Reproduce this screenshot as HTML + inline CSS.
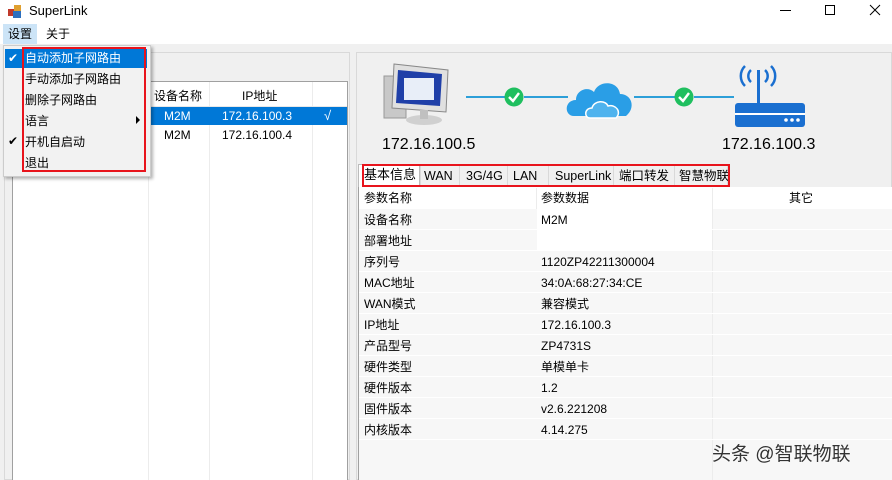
<!DOCTYPE html>
<html><head><meta charset="utf-8"><style>
*{margin:0;padding:0;box-sizing:border-box}
body{width:892px;height:480px;overflow:hidden;background:#f0f0f0;font-family:"Liberation Sans","Noto Sans CJK SC",sans-serif;font-size:12px;color:#000;position:relative}
.a{position:absolute}
.t{white-space:nowrap;line-height:16px;height:16px}
</style></head><body>
<div class="a" style="left:0;top:0;width:892px;height:22px;background:#fff"></div>
<svg class="a" style="left:7px;top:3px" width="16" height="16"><rect x="1" y="6" width="7" height="7" fill="#c0392b"/><rect x="7" y="2" width="7" height="7" fill="#e0a030"/><rect x="6" y="8" width="8" height="7" fill="#2c6fbf"/></svg>
<div class="a t" style="left:29px;top:3px;font-size:13px">SuperLink</div>
<div class="a" style="left:780px;top:10px;width:11px;height:1px;background:#000"></div>
<div class="a" style="left:825px;top:5px;width:10px;height:10px;border:1px solid #000"></div>
<svg class="a" style="left:869px;top:4px" width="12" height="12"><path d="M1 1L11 11M11 1L1 11" stroke="#000" stroke-width="1"/></svg>
<div class="a" style="left:0;top:22px;width:892px;height:22px;background:#fff"></div>
<div class="a" style="left:3px;top:24px;width:34px;height:20px;background:#cce4f7"></div>
<div class="a t" style="left:8px;top:26px">设置</div>
<div class="a t" style="left:46px;top:26px">关于</div>
<div class="a" style="left:4px;top:52px;width:346px;height:428px;border:1px solid #d9d9d9;background:#f0f0f0"></div>
<div class="a" style="left:12px;top:81px;width:336px;height:399px;background:#fff;border:1px solid #a0a0a0;border-bottom:none"></div>
<div class="a" style="left:148px;top:82px;width:1px;height:398px;background:#ececec"></div>
<div class="a" style="left:209px;top:82px;width:1px;height:398px;background:#ececec"></div>
<div class="a" style="left:312px;top:82px;width:1px;height:398px;background:#ececec"></div>
<div class="a" style="left:13px;top:106px;width:334px;height:1px;background:#e8e8e8"></div>
<div class="a t" style="left:154px;top:88px">设备名称</div>
<div class="a t" style="left:242px;top:88px">IP地址</div>
<div class="a" style="left:148px;top:107px;width:199px;height:18px;background:#0078d7"></div>
<div class="a t" style="left:164px;top:108px;color:#fff">M2M</div>
<div class="a t" style="left:222px;top:108px;color:#fff">172.16.100.3</div>
<div class="a t" style="left:324px;top:108px;color:#fff;font-size:13px">√</div>
<div class="a t" style="left:164px;top:127px">M2M</div>
<div class="a t" style="left:222px;top:127px">172.16.100.4</div>
<div class="a" style="left:3px;top:45px;width:148px;height:132px;background:#f2f2f2;border:1px solid #ccc;box-shadow:2px 2px 3px rgba(0,0,0,.3)"></div>
<div class="a" style="left:5px;top:49px;width:142px;height:19px;background:#0078d7"></div>
<div class="a t" style="left:8px;top:50px;color:#fff">✔</div>
<div class="a t" style="left:8px;top:133px">✔</div>
<div class="a t" style="left:25px;top:50px;color:#fff">自动添加子网路由</div>
<div class="a t" style="left:25px;top:71px">手动添加子网路由</div>
<div class="a t" style="left:25px;top:92px">删除子网路由</div>
<div class="a t" style="left:25px;top:113px">语言</div>
<div class="a" style="left:136px;top:116px;width:0;height:0;border-left:4px solid #000;border-top:4px solid transparent;border-bottom:4px solid transparent"></div>
<div class="a t" style="left:25px;top:134px">开机自启动</div>
<div class="a t" style="left:25px;top:155px">退出</div>
<div class="a" style="left:22px;top:47px;width:124px;height:125px;border:2px solid #e8141c"></div>
<div class="a" style="left:356px;top:52px;width:536px;height:428px;border:1px solid #d9d9d9;background:#f0f0f0"></div>
<svg class="a" style="left:382px;top:62px" width="82" height="70">
<rect x="2" y="14" width="22" height="42" fill="#c8c8c8" stroke="#999"/>
<path d="M12 2L66 8L64 50L10 46Z" fill="#e0e0e0" stroke="#888"/>
<path d="M16 8L60 12L58 44L14 41Z" fill="#1f3fa8"/>
<rect x="22" y="16" width="30" height="22" fill="#e8eef8"/>
<ellipse cx="42" cy="58" rx="18" ry="5" fill="#d0d0d0"/>
<rect x="38" y="48" width="8" height="9" fill="#c0c0c0"/>
</svg>
<div class="a" style="left:466px;top:96px;width:48px;height:2px;background:#2d9fd8"></div>
<div class="a" style="left:524px;top:96px;width:44px;height:2px;background:#2d9fd8"></div>
<div class="a" style="left:634px;top:96px;width:42px;height:2px;background:#2d9fd8"></div>
<div class="a" style="left:694px;top:96px;width:40px;height:2px;background:#2d9fd8"></div>
<svg class="a" style="left:504px;top:87px" width="20" height="20"><circle cx="10" cy="10" r="9.5" fill="#1fbf5f"/><path d="M5 10L9 14L15 6" stroke="#fff" stroke-width="2.4" fill="none"/></svg>
<svg class="a" style="left:674px;top:87px" width="20" height="20"><circle cx="10" cy="10" r="9.5" fill="#1fbf5f"/><path d="M5 10L9 14L15 6" stroke="#fff" stroke-width="2.4" fill="none"/></svg>
<svg class="a" style="left:564px;top:76px" width="72" height="44"><path d="M10 40C0 40 0 24 12 24C12 14 24 10 30 16C34 4 54 4 56 18C68 18 72 32 62 40Z" fill="#2a9ee6"/><path d="M26 42C20 42 20 32 28 32C30 24 42 24 44 30C52 28 58 36 52 42Z" fill="#4fb3ee" stroke="#fff" stroke-width="1.5"/></svg>
<svg class="a" style="left:732px;top:60px" width="74" height="72">
<path d="M14 6A14 14 0 0 0 14 26M20 10A8 8 0 0 0 20 22M40 6A14 14 0 0 1 40 26M34 10A8 8 0 0 1 34 22" stroke="#1a6fd0" stroke-width="2.5" fill="none" transform="translate(-1 0)"/>
<rect x="25" y="10" width="3" height="34" fill="#1a6fd0"/>
<rect x="3" y="43" width="70" height="24" rx="3" fill="#1a6fd0"/>
<rect x="3" y="53" width="70" height="2" fill="#fff"/>
<circle cx="54" cy="60" r="1.8" fill="#fff"/><circle cx="60" cy="60" r="1.8" fill="#fff"/><circle cx="66" cy="60" r="1.8" fill="#fff"/>
</svg>
<div class="a t" style="left:382px;top:135px;font-size:16px;line-height:20px;height:20px">172.16.100.5</div>
<div class="a t" style="left:722px;top:135px;font-size:16px;line-height:20px;height:20px">172.16.100.3</div>
<div class="a" style="left:358px;top:164px;width:62px;height:23px;background:#fff;border:1px solid #bbb;border-bottom:none"></div>
<div class="a" style="left:420px;top:165px;width:308px;height:21px;border:1px solid #d9d9d9;background:#f0f0f0"></div>
<div class="a" style="left:459px;top:166px;width:1px;height:20px;background:#d9d9d9"></div>
<div class="a" style="left:507px;top:166px;width:1px;height:20px;background:#d9d9d9"></div>
<div class="a" style="left:548px;top:166px;width:1px;height:20px;background:#d9d9d9"></div>
<div class="a" style="left:613px;top:166px;width:1px;height:20px;background:#d9d9d9"></div>
<div class="a" style="left:674px;top:166px;width:1px;height:20px;background:#d9d9d9"></div>
<div class="a t" style="left:364px;top:167px;font-size:13px">基本信息</div>
<div class="a t" style="left:424px;top:168px;font-size:12.5px">WAN</div>
<div class="a t" style="left:466px;top:168px;font-size:12.5px">3G/4G</div>
<div class="a t" style="left:513px;top:168px;font-size:12.5px">LAN</div>
<div class="a t" style="left:555px;top:168px;font-size:12.5px">SuperLink</div>
<div class="a t" style="left:619px;top:168px;font-size:12.5px">端口转发</div>
<div class="a t" style="left:679px;top:168px;font-size:12.5px">智慧物联</div>
<div class="a" style="left:362px;top:164px;width:368px;height:23px;border:2px solid #e8141c"></div>
<div class="a" style="left:358px;top:187px;width:534px;height:293px;background:#fff;border-left:1px solid #a0a0a0"></div>
<div class="a" style="left:536px;top:188px;width:1px;height:292px;background:#ececec"></div>
<div class="a" style="left:712px;top:188px;width:1px;height:292px;background:#ececec"></div>
<div class="a" style="left:713px;top:209px;width:179px;height:271px;background:#f7f7f7"></div>
<div class="a" style="left:359px;top:209px;width:178px;height:271px;background:#f7f7f7"></div>
<div class="a" style="left:537px;top:251px;width:175px;height:229px;background:#f7f7f7"></div>
<div class="a t" style="left:364px;top:190px">参数名称</div>
<div class="a t" style="left:541px;top:190px">参数数据</div>
<div class="a t" style="left:789px;top:190px">其它</div>
<div class="a" style="left:359px;top:229px;width:533px;height:1px;background:#fff"></div>
<div class="a" style="left:359px;top:250px;width:533px;height:1px;background:#fff"></div>
<div class="a" style="left:359px;top:271px;width:533px;height:1px;background:#fff"></div>
<div class="a" style="left:359px;top:292px;width:533px;height:1px;background:#fff"></div>
<div class="a" style="left:359px;top:313px;width:533px;height:1px;background:#fff"></div>
<div class="a" style="left:359px;top:334px;width:533px;height:1px;background:#fff"></div>
<div class="a" style="left:359px;top:355px;width:533px;height:1px;background:#fff"></div>
<div class="a" style="left:359px;top:376px;width:533px;height:1px;background:#fff"></div>
<div class="a" style="left:359px;top:397px;width:533px;height:1px;background:#fff"></div>
<div class="a" style="left:359px;top:418px;width:533px;height:1px;background:#fff"></div>
<div class="a" style="left:359px;top:439px;width:533px;height:1px;background:#fff"></div>
<div class="a t" style="left:364px;top:212px">设备名称</div><div class="a t" style="left:541px;top:212px">M2M</div>
<div class="a t" style="left:364px;top:233px">部署地址</div>
<div class="a t" style="left:364px;top:254px">序列号</div><div class="a t" style="left:541px;top:254px">1120ZP42211300004</div>
<div class="a t" style="left:364px;top:275px">MAC地址</div><div class="a t" style="left:541px;top:275px">34:0A:68:27:34:CE</div>
<div class="a t" style="left:364px;top:296px">WAN模式</div><div class="a t" style="left:541px;top:296px">兼容模式</div>
<div class="a t" style="left:364px;top:317px">IP地址</div><div class="a t" style="left:541px;top:317px">172.16.100.3</div>
<div class="a t" style="left:364px;top:338px">产品型号</div><div class="a t" style="left:541px;top:338px">ZP4731S</div>
<div class="a t" style="left:364px;top:359px">硬件类型</div><div class="a t" style="left:541px;top:359px">单模单卡</div>
<div class="a t" style="left:364px;top:380px">硬件版本</div><div class="a t" style="left:541px;top:380px">1.2</div>
<div class="a t" style="left:364px;top:401px">固件版本</div><div class="a t" style="left:541px;top:401px">v2.6.221208</div>
<div class="a t" style="left:364px;top:422px">内核版本</div><div class="a t" style="left:541px;top:422px">4.14.275</div>
<div class="a t" style="left:712px;top:443px;font-size:19px;line-height:24px;height:24px;color:#333;text-shadow:0 0 2px #fff">头条 @智联物联</div>
</body></html>
